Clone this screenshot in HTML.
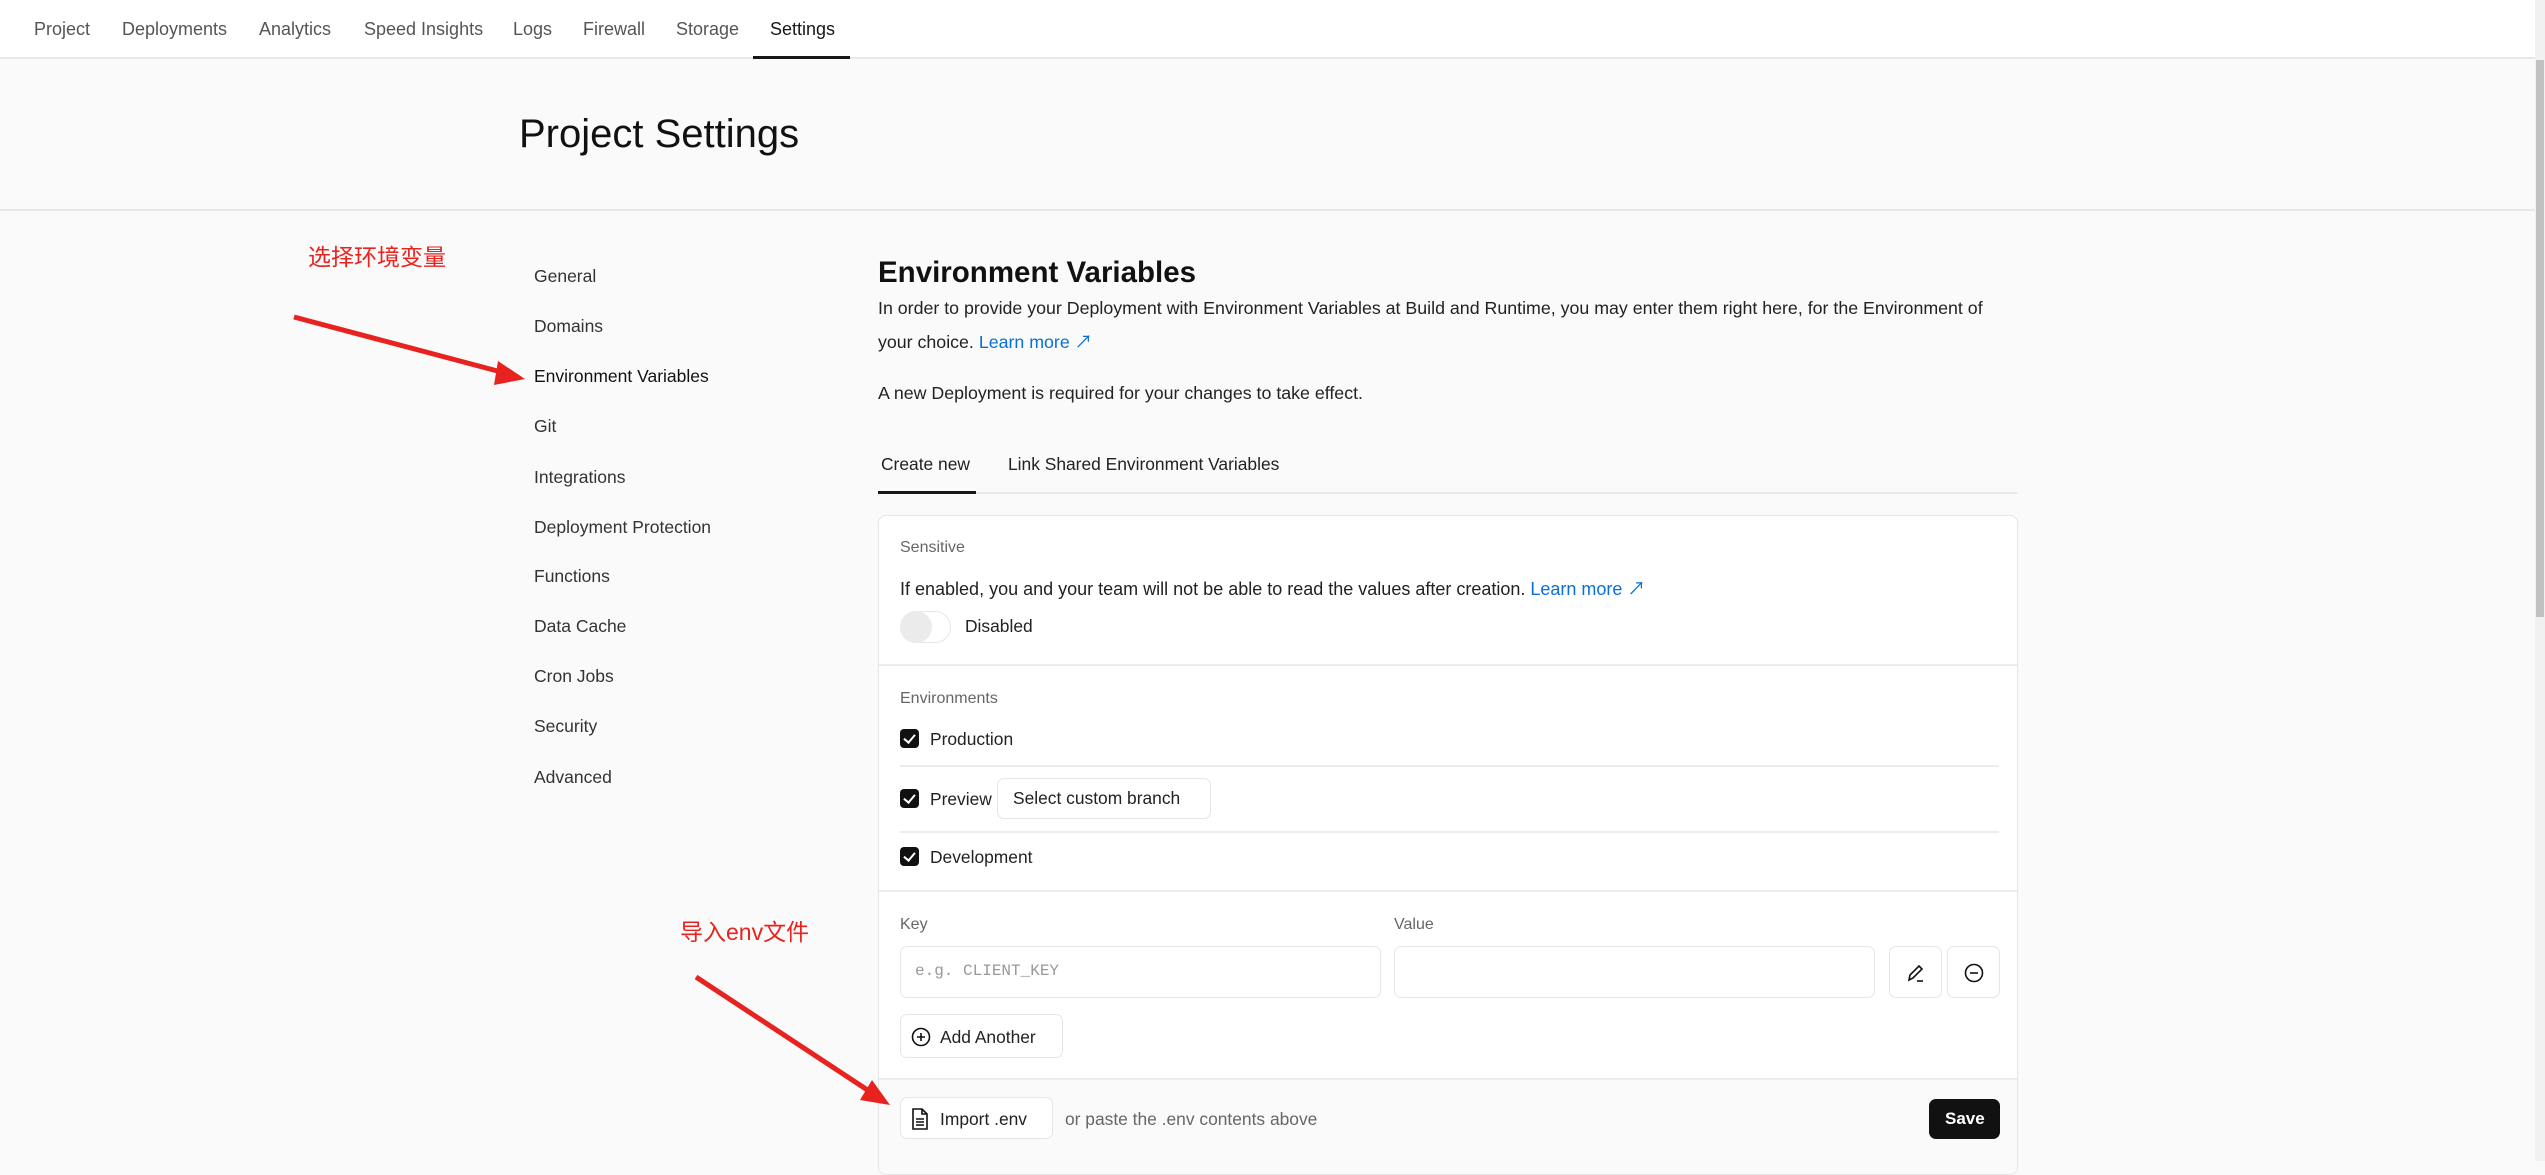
<!DOCTYPE html>
<html><head><meta charset="utf-8"><style>
*{box-sizing:border-box;margin:0;padding:0}
body{width:2545px;height:1161px;overflow:hidden;background:#fafafa;font-family:"Liberation Sans","Noto Sans CJK SC",sans-serif;color:#171717;position:relative}
.a{position:absolute;white-space:nowrap}
.nav{position:absolute;left:0;top:0;width:2535px;height:59px;background:#fff;border-bottom:2px solid #e8e8e8}
.nav span{position:absolute;top:19px;font-size:18px;color:#555}
.side{font-size:17.5px;color:#333}
.card{position:absolute;left:878px;top:515px;width:1140px;height:660px;background:#fff;border:1.5px solid #e6e6e6;border-radius:8px;overflow:hidden}
.hr{position:absolute;height:2px;background:#ececec}
.lbl{font-size:16px;color:#666}
.t{font-size:17.4px;color:#222}
.cb{position:absolute;width:19px;height:19px;background:#111;border-radius:4px}
.cb:after{content:"";position:absolute;left:6px;top:3px;width:5px;height:9px;border:solid #fff;border-width:0 2px 2px 0;transform:rotate(40deg)}
.btn{position:absolute;background:#fff;border:1.5px solid #e6e6e6;border-radius:7px}
</style></head><body>
<div class="nav">
<span style="left:34px">Project</span><span style="left:122px">Deployments</span><span style="left:259px">Analytics</span><span style="left:364px">Speed Insights</span><span style="left:513px">Logs</span><span style="left:583px">Firewall</span><span style="left:676px">Storage</span><span style="left:770px;color:#171717">Settings</span>
<div style="position:absolute;left:753px;top:56px;width:97px;height:3px;background:#171717"></div>
</div>
<div style="position:absolute;left:2535px;top:0;width:10px;height:1161px;background:#f1f1f1"></div>
<div style="position:absolute;left:2536px;top:60px;width:8px;height:557px;background:#c1c1c1"></div>
<div class="a" style="left:519px;top:112px;font-size:40px;color:#111">Project Settings</div>
<div style="position:absolute;left:0;top:209px;width:2535px;height:2px;background:#e8e8e8"></div>

<div class="a side" style="left:534px;top:266px">General</div>
<div class="a side" style="left:534px;top:316px">Domains</div>
<div class="a side" style="left:534px;top:366px;color:#111">Environment Variables</div>
<div class="a side" style="left:534px;top:416px">Git</div>
<div class="a side" style="left:534px;top:467px">Integrations</div>
<div class="a side" style="left:534px;top:517px">Deployment Protection</div>
<div class="a side" style="left:534px;top:566px">Functions</div>
<div class="a side" style="left:534px;top:616px">Data Cache</div>
<div class="a side" style="left:534px;top:666px">Cron Jobs</div>
<div class="a side" style="left:534px;top:716px">Security</div>
<div class="a side" style="left:534px;top:767px">Advanced</div>

<div class="a" style="left:878px;top:256px;font-size:29.5px;font-weight:bold;color:#111">Environment Variables</div>
<div class="a t" style="left:878px;top:298px;font-size:17.8px">In order to provide your Deployment with Environment Variables at Build and Runtime, you may enter them right here, for the Environment of</div>
<div class="a t" style="left:878px;top:328px;font-size:17.8px">your choice. <span style="color:#0a6fd8">Learn more ↗</span></div>
<div class="a t" style="left:878px;top:383px;font-size:17.8px">A new Deployment is required for your changes to take effect.</div>
<div class="a t" style="left:881px;top:454px">Create new</div>
<div class="a t" style="left:1008px;top:454px">Link Shared Environment Variables</div>
<div style="position:absolute;left:878px;top:492px;width:1139px;height:2px;background:#e8e8e8"></div>
<div style="position:absolute;left:878px;top:491px;width:98px;height:3px;background:#171717"></div>

<div class="card">
<div class="a lbl" style="left:21px;top:23px">Sensitive</div>
<div class="a t" style="left:21px;top:59px;font-size:18px">If enabled, you and your team will not be able to read the values after creation. <span style="color:#0a6fd8">Learn more ↗</span></div>
<div style="position:absolute;left:21px;top:95px;width:51px;height:32px;border:1.5px solid #e6e6e6;border-radius:16px;background:#fff"></div>
<div style="position:absolute;left:21px;top:95px;width:32px;height:32px;border-radius:16px;background:#ebebeb"></div>
<div class="a t" style="left:86px;top:100px">Disabled</div>
<div class="hr" style="left:0;top:148px;width:1140px"></div>
<div class="a lbl" style="left:21px;top:174px">Environments</div>
<div class="cb" style="left:21px;top:213px"></div><div class="a t" style="left:51px;top:213px">Production</div>
<div class="hr" style="left:21px;top:249px;width:1099px"></div>
<div class="cb" style="left:21px;top:273px"></div><div class="a t" style="left:51px;top:273px">Preview</div>
<div class="btn" style="left:118px;top:262px;width:214px;height:41px"></div><div class="a t" style="left:134px;top:272px">Select custom branch</div>
<div class="hr" style="left:21px;top:315px;width:1099px"></div>
<div class="cb" style="left:21px;top:331px"></div><div class="a t" style="left:51px;top:331px">Development</div>
<div class="hr" style="left:0;top:374px;width:1140px"></div>
<div class="a lbl" style="left:21px;top:400px">Key</div>
<div class="a lbl" style="left:515px;top:400px">Value</div>
<div class="btn" style="left:21px;top:430px;width:481px;height:52px"></div>
<div class="a" style="left:36px;top:446px;font-family:'Liberation Mono',monospace;font-size:16px;color:#999">e.g. CLIENT_KEY</div>
<div class="btn" style="left:515px;top:430px;width:481px;height:52px"></div>
<div class="btn" style="left:1010px;top:430px;width:53px;height:52px"></div>
<svg class="a" style="left:1026px;top:446px" width="22" height="22" viewBox="0 0 22 22" fill="none" stroke="#111" stroke-width="1.6"><path d="M4 18l1-5L14 4l3 3-9 9z"/><path d="M12 19h6"/></svg>
<div class="btn" style="left:1068px;top:430px;width:53px;height:52px"></div>
<svg class="a" style="left:1084px;top:446px" width="22" height="22" viewBox="0 0 22 22" fill="none" stroke="#111" stroke-width="1.6"><circle cx="11" cy="11" r="8.5"/><path d="M7 11h8"/></svg>
<div class="btn" style="left:21px;top:498px;width:163px;height:44px"></div>
<svg class="a" style="left:31px;top:510px" width="22" height="22" viewBox="0 0 22 22" fill="none" stroke="#111" stroke-width="1.6"><circle cx="11" cy="11" r="8.5"/><path d="M7 11h8M11 7v8"/></svg>
<div class="a t" style="left:61px;top:511px">Add Another</div>
<div style="position:absolute;left:0;top:562px;width:1140px;height:100px;background:#fafafa;border-top:2px solid #ececec"></div>
<div class="btn" style="left:21px;top:581px;width:153px;height:42px"></div>
<svg class="a" style="left:32px;top:592px" width="18" height="22" viewBox="0 0 18 22" fill="none" stroke="#111" stroke-width="1.6"><path d="M2 1h9l5 5v15H2z"/><path d="M11 1v5h5M5 11h8M5 14h8M5 17h8"/></svg>
<div class="a t" style="left:61px;top:593px">Import .env</div>
<div class="a t" style="left:186px;top:593px;color:#666">or paste the .env contents above</div>
<div style="position:absolute;left:1050px;top:583px;width:71px;height:40px;background:#111;border-radius:7px"></div>
<div class="a" style="left:1066px;top:593px;font-size:17px;font-weight:bold;color:#fff">Save</div>
</div>

<div class="a" style="left:308px;top:238px;font-size:23px;color:#e8231f">选择环境变量</div>
<div class="a" style="left:680px;top:913px;font-size:23px;color:#e8231f">导入env文件</div>
<svg class="a" style="left:0;top:0" width="2545" height="1161"><g stroke="#e8231f" stroke-width="5" fill="#e8231f"><line x1="294" y1="317" x2="505" y2="373"/><polygon points="525,379 498,361 494,385" stroke="none"/><line x1="696" y1="977" x2="872" y2="1093"/><polygon points="890,1105 872,1080 860,1100" stroke="none"/></g></svg>
</body></html>
